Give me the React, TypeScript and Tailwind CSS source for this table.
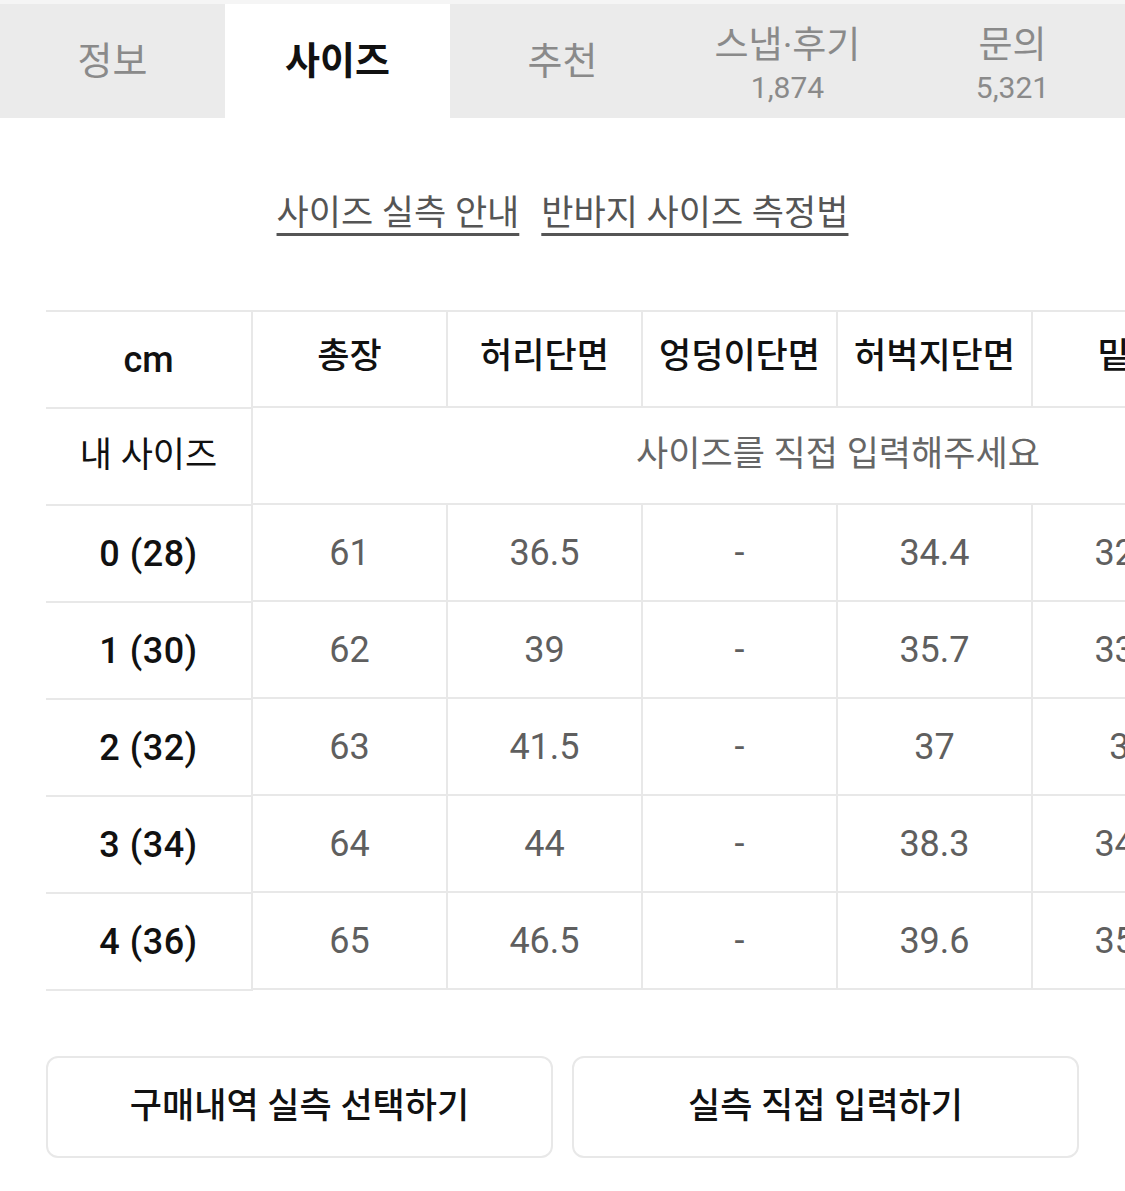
import React from 'react';

const tabs = [
  { name: '정보' },
  { name: '사이즈', active: true },
  { name: '추천' },
  { name: '스냅·후기', count: '1,874' },
  { name: '문의', count: '5,321' },
];

const columns = ['총장', '허리단면', '엉덩이단면', '허벅지단면', '밑위', '밑단단면'];

const rows = [
  { size: '0 (28)', values: ['61', '36.5', '-', '34.4', '32.5', '30'] },
  { size: '1 (30)', values: ['62', '39', '-', '35.7', '33.5', '31'] },
  { size: '2 (32)', values: ['63', '41.5', '-', '37', '34', '32'] },
  { size: '3 (34)', values: ['64', '44', '-', '38.3', '34.5', '33'] },
  { size: '4 (36)', values: ['65', '46.5', '-', '39.6', '35.5', '34'] },
];

const font = { fontFamily: '"Roboto", "Noto Sans CJK KR", sans-serif' };

const App = () => {
  return (
    <div className="w-[1125px] min-h-[1191px] bg-white" style={font}>
      {/* tabs */}
      <div className="bg-[#f5f5f5] pt-1">
        <div className="flex h-[114px] bg-[#ebebeb]">
          {tabs.map((tab) => (
            <div
              key={tab.name}
              className={`flex-1 flex flex-col items-center justify-center ${tab.active ? 'bg-white' : ''}`}
            >
              {tab.count ? (
                <div className="flex flex-col items-center pt-[10px]">
                  <span className="text-[37px] leading-[42px] text-[#8a8a8a]">{tab.name}</span>
                  <span className="text-[30px] leading-[38px] text-[#8a8a8a] mt-[2px]">{tab.count}</span>
                </div>
              ) : (
                <span
                  className={`text-[38px] leading-[44px] ${tab.active ? 'font-bold text-[#111]' : 'text-[#8a8a8a]'}`}
                >
                  {tab.name}
                </span>
              )}
            </div>
          ))}
        </div>
      </div>

      {/* guide links */}
      <div className="h-[192px] flex items-center justify-center gap-[22px]">
        <span className="text-[35px] text-[#555] underline decoration-[3px] underline-offset-[8px]">사이즈 실측 안내</span>
        <span className="text-[35px] text-[#555] underline decoration-[3px] underline-offset-[8px]">반바지 사이즈 측정법</span>
      </div>

      {/* size table */}
      <div className="ml-[46px] flex border-t-2 border-[#e8e8e8] overflow-hidden">
        <div className="w-[207px] shrink-0 border-r-2 border-[#e8e8e8]">
          <div className="h-[97px] border-b-2 border-[#e8e8e8] flex items-center justify-center text-[36px] font-medium text-[#111]">
            cm
          </div>
          <div className="h-[97px] border-b-2 border-[#e8e8e8] flex items-center justify-center text-[35px] text-[#111]">
            내 사이즈
          </div>
          {rows.map((row) => (
            <div
              key={row.size}
              className="h-[97px] border-b-2 border-[#e8e8e8] flex items-center justify-center text-[36px] font-medium tracking-[0.5px] text-[#111]"
            >
              {row.size}
            </div>
          ))}
        </div>
        <div className="w-[1170px] shrink-0">
          <div className="flex h-[96px] border-b-2 border-[#e8e8e8]">
            {columns.map((col) => (
              <div
                key={col}
                className="w-[195px] shrink-0 border-r-2 border-[#e8e8e8] flex items-center justify-center text-[35px] font-medium text-[#111] pb-1"
              >
                {col}
              </div>
            ))}
          </div>
          <div className="h-[97px] border-b-2 border-[#e8e8e8] flex items-center justify-center text-[35px] text-[#666]">
            사이즈를 직접 입력해주세요
          </div>
          {rows.map((row) => (
            <div key={row.size} className="flex h-[97px] border-b-2 border-[#e8e8e8]">
              {row.values.map((v, i) => (
                <div
                  key={i}
                  className="w-[195px] shrink-0 border-r-2 border-[#e8e8e8] flex items-center justify-center text-[36px] text-[#5f5f5f]"
                >
                  {v}
                </div>
              ))}
            </div>
          ))}
        </div>
      </div>

      {/* buttons */}
      <div className="px-[46px] mt-[65px] flex gap-[19px]">
        <button className="flex-1 h-[102px] rounded-xl border-2 border-[#e8e8e8] bg-white text-[35px] font-medium text-[#111]">
          구매내역 실측 선택하기
        </button>
        <button className="flex-1 h-[102px] rounded-xl border-2 border-[#e8e8e8] bg-white text-[35px] font-medium text-[#111]">
          실측 직접 입력하기
        </button>
      </div>
    </div>
  );
};

export default App;
